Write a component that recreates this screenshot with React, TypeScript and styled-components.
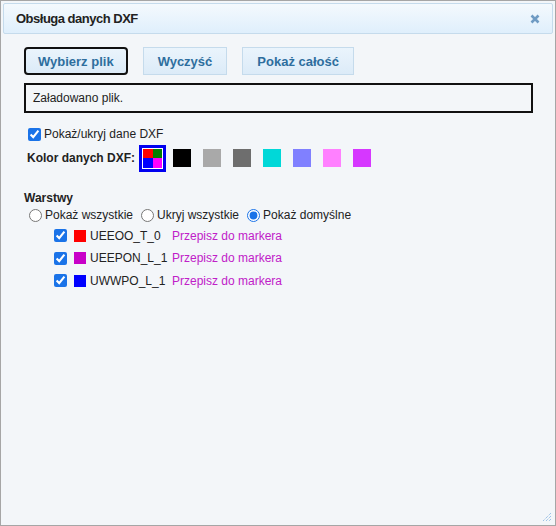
import styled, { createGlobalStyle } from 'styled-components';

const Global = createGlobalStyle`
    html, body {
        margin: 0;
        padding: 0;
        background: #fff;
    }
    body {
        font-family: "Liberation Sans", Arial, sans-serif;
        color: #222;
    }
`;

const Dialog = styled.div`
    box-sizing: border-box;
    width: 556px;
    height: 526px;
    border: 1px solid #a6a6a6;
    background: #f3f6f9;
    padding: 2px;
    position: relative;
    display: flex;
    flex-direction: column;
`;

const TitleBar = styled.div`
    height: 29px;
    display: flex;
    align-items: center;
    justify-content: space-between;
    padding: 0 12px 0 12px;
    border: 1px solid #c5dbec;
    border-radius: 2px;
    background: linear-gradient(#f4f9fd, #dfeffc);
`;

const Title = styled.span`
    font-size: 13px;
    letter-spacing: -0.5px;
    font-weight: bold;
    color: #222;
`;

const Close = styled.span`
    width: 10px;
    height: 10px;
    display: flex;
    color: #6f9bc3;
`;

const Body = styled.div`
    padding: 13px 20px 0 21px;
    font-size: 12px;
`;

const Toolbar = styled.div`
    display: flex;
    gap: 15px;
`;

const Button = styled.button<{ $active?: boolean }>`
    height: 28px;
    box-sizing: border-box;
    padding: 0 ${p => (p.$active ? '12px' : '14px')};
    border: ${p => (p.$active ? '2px solid #111' : '1px solid #c5dbec')};
    border-radius: ${p => (p.$active ? '4px' : '0')};
    background: linear-gradient(#eaf4fc, #dcebf8);
    color: #2e6e9e;
    font-family: "Liberation Sans", Arial, sans-serif;
    font-size: 13px;
    font-weight: bold;
    cursor: pointer;
`;

const Status = styled.div`
    margin-top: 8px;
    height: 30px;
    box-sizing: border-box;
    border: 2px solid #111;
    padding: 0 7px;
    display: flex;
    align-items: center;
    font-size: 12px;
    color: #222;
`;

const Check = styled.input`
    width: 13px;
    height: 13px;
    margin: 0 3px 0 0;
    accent-color: #1a73e8;
`;

const Row = styled.label`
    display: flex;
    align-items: center;
`;

const ToggleRow = styled(Row)`
    margin: 14px 0 0 4px;
`;

const ColorRow = styled.div`
    display: flex;
    align-items: center;
    margin: 3px 0 0 3px;
    height: 28px;
`;

const Strong = styled.span`
    font-weight: bold;
    margin-right: 4px;
`;

const Swatch = styled.span<{ $color: string }>`
    width: 18px;
    height: 18px;
    margin-right: 12px;
    background: ${p => p.$color};
`;

const Selected = styled.span`
    box-sizing: border-box;
    width: 27px;
    height: 27px;
    border: 3px solid #0000f0;
    padding: 1px;
    background: #fff;
    margin-right: 7px;
    display: grid;
    grid-template-columns: 1fr 1fr;
`;

const Quad = styled.span<{ $color: string }>`
    background: ${p => p.$color};
`;

const Section = styled.div`
    margin-top: 19px;
    font-weight: bold;
`;

const Radios = styled.div`
    display: flex;
    align-items: center;
    gap: 3px;
    margin-top: 3px;
`;

const Radio = styled.input`
    width: 13px;
    height: 13px;
    margin: 0 3px 0 5px;
    accent-color: #1a73e8;
`;

const Layers = styled.div`
    margin: 5px 0 0 30px;
    display: flex;
    flex-direction: column;
    gap: 5.5px;
`;

const Layer = styled.div`
    display: flex;
    align-items: center;
    height: 17px;
    font-size: 12px;
`;

const LayerColor = styled.span<{ $color: string }>`
    width: 12px;
    height: 12px;
    margin: 0 4px 0 4px;
    background: ${p => p.$color};
`;

const LayerName = styled.span`
    width: 82px;
    color: #222;
`;

const Link = styled.a`
    color: #c020c8;
    cursor: pointer;
`;

const Grip = styled.svg`
    position: absolute;
    right: 3px;
    bottom: 3px;
`;

const colors = ['#000000', '#a9a9a9', '#6e6e6e', '#00d8d8', '#8080ff', '#ff80ff', '#d637ff'];

const layers = [
    { name: 'UEEOO_T_0', color: '#ff0000' },
    { name: 'UEEPON_L_1', color: '#c800c8' },
    { name: 'UWWPO_L_1', color: '#0000ff' },
];

const App = () => (
    <>
        <Global />
        <Dialog>
            <TitleBar>
                <Title>Obsługa danych DXF</Title>
                <Close>
                    <svg width="10" height="10" viewBox="0 0 10 10">
                        <path d="M1.5 1.5 L8.5 8.5 M8.5 1.5 L1.5 8.5" stroke="currentColor" strokeWidth="2.6" />
                    </svg>
                </Close>
            </TitleBar>
            <Body>
                <Toolbar>
                    <Button type="button" $active>Wybierz plik</Button>
                    <Button type="button">Wyczyść</Button>
                    <Button type="button">Pokaż całość</Button>
                </Toolbar>
                <Status>Załadowano plik.</Status>
                <ToggleRow>
                    <Check type="checkbox" defaultChecked />
                    Pokaż/ukryj dane DXF
                </ToggleRow>
                <ColorRow>
                    <Strong>Kolor danych DXF:</Strong>
                    <Selected>
                        <Quad $color="#ff0000" />
                        <Quad $color="#008000" />
                        <Quad $color="#0000ff" />
                        <Quad $color="#ff00ff" />
                    </Selected>
                    {colors.map(c => <Swatch key={c} $color={c} />)}
                </ColorRow>
                <Section>Warstwy</Section>
                <Radios>
                    <Row><Radio type="radio" name="w" />Pokaż wszystkie</Row>
                    <Row><Radio type="radio" name="w" />Ukryj wszystkie</Row>
                    <Row><Radio type="radio" name="w" defaultChecked />Pokaż domyślne</Row>
                </Radios>
                <Layers>
                    {layers.map(l => (
                        <Layer key={l.name}>
                            <Check type="checkbox" defaultChecked />
                            <LayerColor $color={l.color} />
                            <LayerName>{l.name}</LayerName>
                            <Link>Przepisz do markera</Link>
                        </Layer>
                    ))}
                </Layers>
            </Body>
            <Grip width="12" height="12" viewBox="0 0 12 12">
                <path d="M11 3 L3 11 M11 6 L6 11 M11 9 L9 11" stroke="#7aaee0" strokeWidth="1" strokeDasharray="1 1" />
            </Grip>
        </Dialog>
    </>
);

export default App;
